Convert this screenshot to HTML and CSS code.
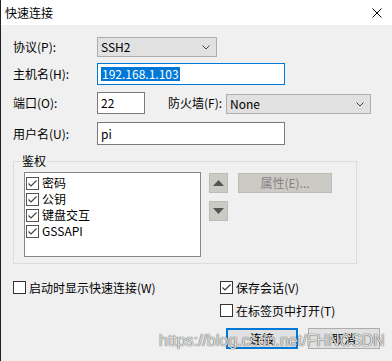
FILE: index.html
```html
<!DOCTYPE html>
<html lang="zh-CN">

<head>
    <meta charset="UTF-8">
    <meta name="viewport" content="width=device-width, initial-scale=1.0">
    <title>快速连接</title>
    <link rel="stylesheet" href="styles.css">
</head>

<body>
    <div class="window">
        <div class="titlebar">
            <span class="title">快速连接</span>
            <svg class="close" width="10" height="10" viewBox="0 0 10 10">
                <path d="M0.5 0.5 L9.5 9.5 M9.5 0.5 L0.5 9.5" stroke="#000" stroke-width="1" fill="none" />
            </svg>
        </div>

        <div class="content">
            <div class="form">
                <div class="row row-proto">
                    <label class="lbl">协议(P):</label>
                    <div class="select proto">
                        <span>SSH2</span>
                        <svg width="8" height="5" viewBox="0 0 8 5"><polyline points="0.5,0.5 4,4 7.5,0.5" stroke="#444" fill="none" /></svg>
                    </div>
                </div>
                <div class="row row-host">
                    <label class="lbl">主机名(H):</label>
                    <div class="input host focused"><span class="sel">192.168.1.103</span></div>
                </div>
                <div class="row row-port">
                    <label class="lbl">端口(O):</label>
                    <div class="input port">22</div>
                    <label class="lbl-fw">防火墙(F):</label>
                    <div class="select firewall">
                        <span>None</span>
                        <svg width="8" height="5" viewBox="0 0 8 5"><polyline points="0.5,0.5 4,4 7.5,0.5" stroke="#444" fill="none" /></svg>
                    </div>
                </div>
                <div class="row row-user">
                    <label class="lbl">用户名(U):</label>
                    <div class="input user">pi</div>
                </div>
            </div>

            <fieldset class="auth">
                <legend>鉴权</legend>
                <div class="auth-inner">
                    <div class="listbox">
                        <div class="item"><span class="cb on"><svg width="11" height="11" viewBox="0 0 11 11"><polyline points="1.5,5.5 4,8 9.5,2.5" stroke="#444" stroke-width="1.2" fill="none" /></svg></span>密码</div>
                        <div class="item"><span class="cb on"><svg width="11" height="11" viewBox="0 0 11 11"><polyline points="1.5,5.5 4,8 9.5,2.5" stroke="#444" stroke-width="1.2" fill="none" /></svg></span>公钥</div>
                        <div class="item"><span class="cb on"><svg width="11" height="11" viewBox="0 0 11 11"><polyline points="1.5,5.5 4,8 9.5,2.5" stroke="#444" stroke-width="1.2" fill="none" /></svg></span>键盘交互</div>
                        <div class="item"><span class="cb on"><svg width="11" height="11" viewBox="0 0 11 11"><polyline points="1.5,5.5 4,8 9.5,2.5" stroke="#444" stroke-width="1.2" fill="none" /></svg></span>GSSAPI</div>
                    </div>
                    <div class="side">
                        <div class="side-row">
                            <div class="arrow-btn">
                                <svg width="11" height="6" viewBox="0 0 11 6"><polygon points="0,6 5.5,0 11,6" fill="#555" /></svg>
                            </div>
                            <div class="btn disabled">属性(E)...</div>
                        </div>
                        <div class="arrow-btn">
                            <svg width="11" height="6" viewBox="0 0 11 6"><polygon points="0,0 11,0 5.5,6" fill="#555" /></svg>
                        </div>
                    </div>
                </div>
            </fieldset>

            <div class="options">
                <div class="col">
                    <div class="check"><span class="cb"></span>启动时显示快速连接(W)</div>
                </div>
                <div class="col">
                    <div class="check"><span class="cb on"><svg width="11" height="11" viewBox="0 0 11 11"><polyline points="1.5,5.5 4,8 9.5,2.5" stroke="#333" stroke-width="1.2" fill="none" /></svg></span>保存会话(V)</div>
                    <div class="check"><span class="cb"></span>在标签页中打开(T)</div>
                </div>
            </div>

            <div class="buttons">
                <div class="btn primary">连接</div>
                <div class="btn">取消</div>
            </div>
        </div>

        <div class="watermark">https://blog.csdn.net/FHNCSDN</div>
    </div>
</body>

</html>
```

FILE: styles.css
```css
* {
    margin: 0;
    padding: 0;
    box-sizing: border-box;
}

body {
    width: 392px;
    height: 361px;
    overflow: hidden;
    background: #f0f0f0;
    font-family: "Noto Sans CJK SC", "Noto Sans", sans-serif;
    font-size: 12px;
    color: #000;
}

.window {
    position: relative;
    width: 392px;
    height: 361px;
    background: #f0f0f0;
    border-left: 1px solid #222;
}

.titlebar {
    height: 25px;
    background: #fff;
    display: flex;
    align-items: center;
    justify-content: space-between;
    padding: 0 10px 0 4px;
}

.title {
    font-size: 12px;
    line-height: 14px;
}

.close {
    display: block;
}

.content {
    padding: 12px 0 0 12px;
}

.row {
    display: flex;
    align-items: center;
}

.row-proto {
    height: 20px;
    margin-bottom: 6px;
}

.row-host {
    height: 22px;
    margin-bottom: 7px;
}

.row-port {
    height: 22px;
    margin-bottom: 8px;
}

.row-user {
    height: 23px;
}

.lbl {
    width: 84px;
    line-height: 14px;
}

.lbl-fw {
    margin-left: 23px;
    width: 58px;
    line-height: 14px;
}

.select {
    height: 20px;
    background: #e1e1e1;
    border: 1px solid #adadad;
    display: flex;
    align-items: center;
    justify-content: space-between;
    padding: 0 6px 0 3px;
    line-height: 14px;
}

.select.proto {
    width: 120px;
}

.select.firewall {
    width: 145px;
    align-self: flex-end;
}

.input {
    height: 100%;
    background: #fff;
    border: 1px solid #7a7a7a;
    display: flex;
    align-items: center;
    padding-left: 3px;
    line-height: 14px;
}

.input.host,
.input.user {
    width: 188px;
}

.input.port {
    width: 48px;
}

.input.focused {
    border-color: #0078d7;
}

.sel {
    background: #0078d7;
    color: #fff;
    padding: 0 1px;
}

.auth {
    margin-top: 8px;
    width: 344px;
    border: 1px solid #dcdcdc;
    padding: 3px 0 6px 10px;
}

.auth legend {
    margin-left: -3px;
    padding: 0 1px;
    line-height: 16px;
}

.auth-inner {
    display: flex;
}

.listbox {
    width: 177px;
    height: 85px;
    background: #fff;
    border: 1px solid #828790;
    padding: 2px 0 0 1px;
}

.item {
    height: 16px;
    display: flex;
    align-items: center;
    line-height: 14px;
}

.cb {
    width: 13px;
    height: 13px;
    border: 1px solid #333;
    background: #fff;
    display: inline-flex;
    align-items: center;
    justify-content: center;
    margin-right: 3px;
    flex-shrink: 0;
}

.item .cb {
    border-color: #555;
}

.cb svg {
    display: block;
}

.side {
    margin-left: 8px;
    margin-top: 1px;
    display: flex;
    flex-direction: column;
    gap: 8px;
}

.side-row {
    display: flex;
    gap: 10px;
}

.arrow-btn {
    width: 19px;
    height: 20px;
    background: #cccac5;
    border: 1px solid #bdbbb6;
    display: flex;
    align-items: center;
    justify-content: center;
}

.btn {
    width: 72px;
    height: 21px;
    background: #e1e1e1;
    border: 1px solid #adadad;
    display: flex;
    align-items: center;
    justify-content: center;
    line-height: 14px;
}

.btn.disabled {
    width: 94px;
    height: 20px;
    background: #cccac5;
    border-color: #bdbbb6;
    color: #838383;
}

.btn.primary {
    border: 2px solid #0078d7;
}

.options {
    margin-top: 17px;
    display: grid;
    grid-template-columns: 207px auto;
}

.col {
    display: flex;
    flex-direction: column;
    gap: 10px;
}

.check {
    height: 13px;
    display: flex;
    align-items: center;
    line-height: 14px;
}

.buttons {
    margin-top: 11px;
    padding-left: 213px;
    display: flex;
    gap: 10px;
}

.watermark {
    position: absolute;
    left: 158px;
    top: 332px;
    font-family: "Liberation Sans", Arial, sans-serif;
    font-size: 16px;
    line-height: 18px;
    color: rgba(255, 255, 255, 0.85);
    text-shadow: 0 0 1px rgba(0, 0, 0, 0.7), 0 0 1px rgba(0, 0, 0, 0.5);
    white-space: nowrap;
}
```
